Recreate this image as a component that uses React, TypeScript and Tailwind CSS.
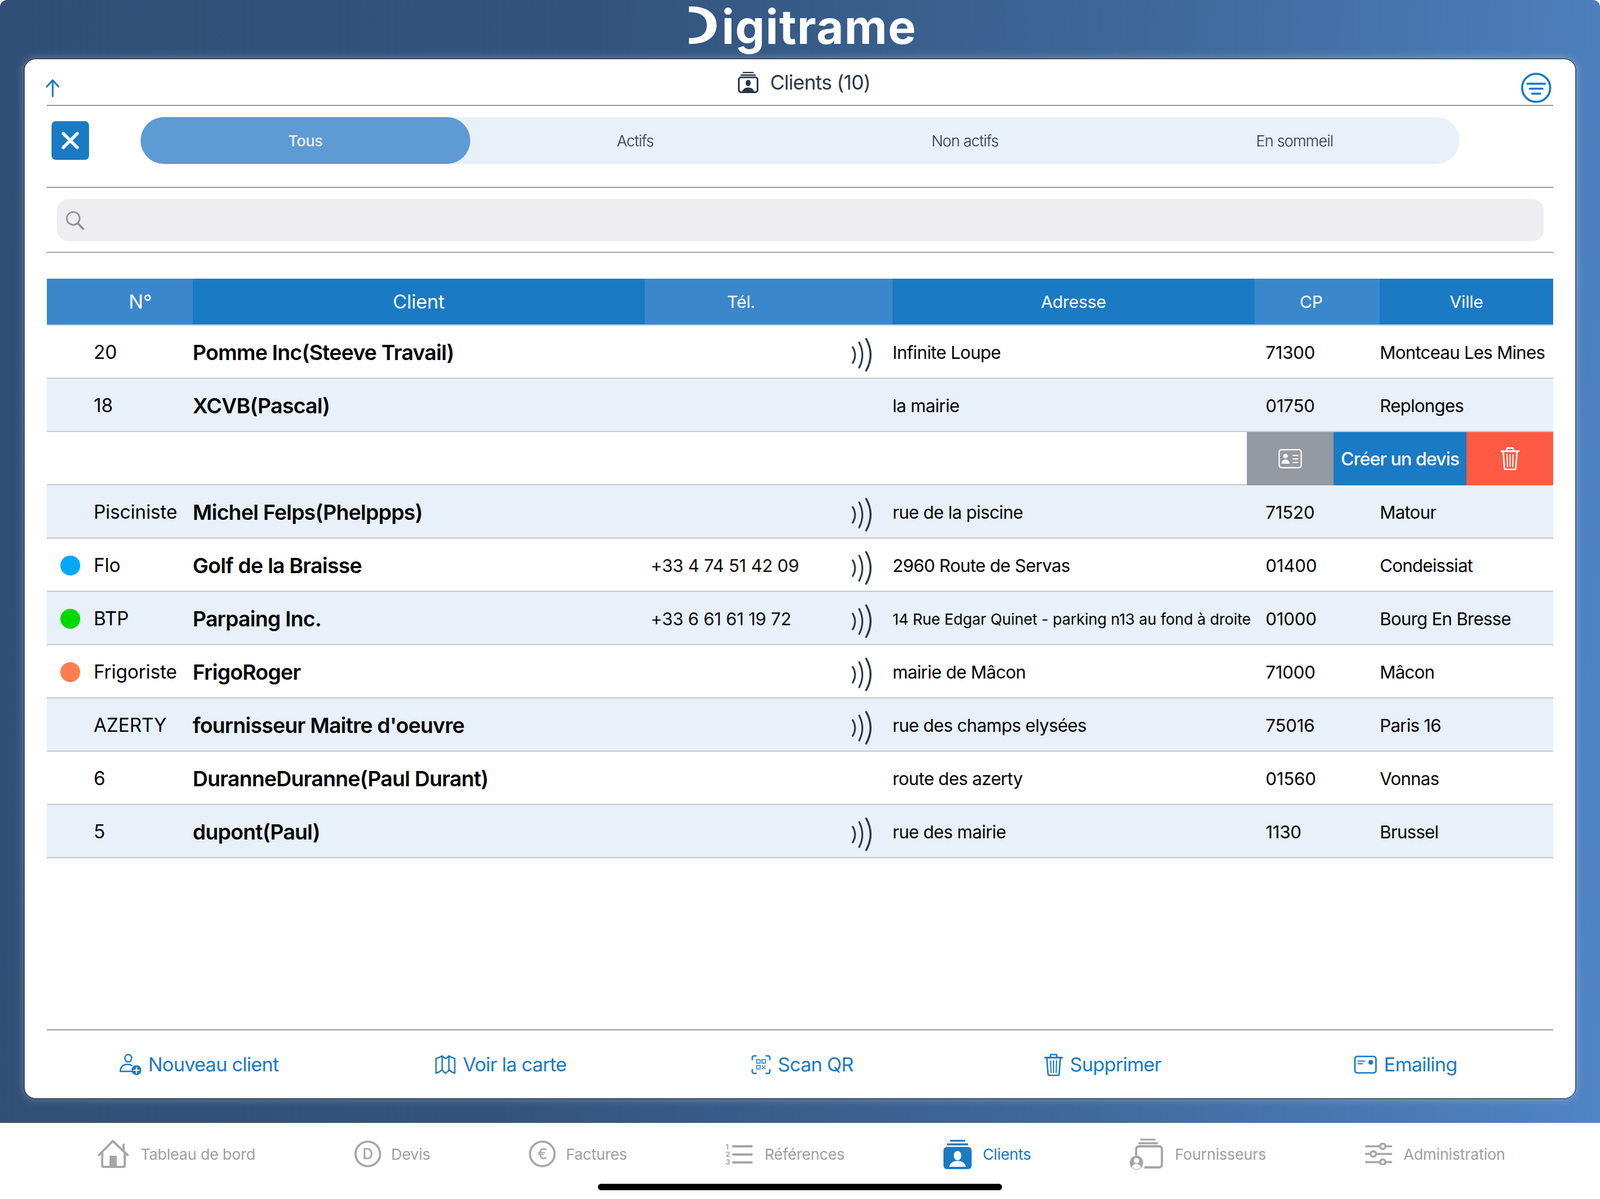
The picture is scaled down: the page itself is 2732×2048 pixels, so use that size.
import React from "react";

const BLUE = "#1a7ac4";
const GRAY = "#a6a6a6";
const INK = "#2b3648";

function ClientsIcon({ color, solid, className }: { color: string; solid?: boolean; className: string }) {
  return (
    <svg viewBox="0 0 48 51" className={className}>
      <rect x="11" y="1" width="26" height="3" rx="1" fill={color} />
      <rect x="6" y="7" width="36" height="3.4" rx="1" fill={color} />
      {solid ? (
        <>
          <rect x="0" y="13" width="48" height="38" rx="6" fill={color} />
          <ellipse cx="24" cy="28" rx="6.5" ry="8" fill="#fff" />
          <path d="M10 47c1-7 7-10 14-10s13 3 14 10z" fill="#fff" />
        </>
      ) : (
        <>
          <rect x="2" y="14" width="44" height="35" rx="5" fill="none" stroke={color} strokeWidth="4" />
          <ellipse cx="24" cy="27" rx="6" ry="7.5" fill={color} />
          <path d="M10 48c1-7 7-10 14-10s13 3 14 10z" fill={color} />
        </>
      )}
    </svg>
  );
}

function Nfc() {
  return (
    <svg viewBox="0 0 37 58" className="w-[37px] h-[58px] mt-[8px]" fill="none" stroke={INK} strokeLinecap="round" strokeWidth="3">
      <path d="M2 16q8 13.500 0 27" />
      <path d="M13 8q11 21.500 0 43" />
      <path d="M25 2q15 27 0 54" strokeWidth="3.400" />
    </svg>
  );
}

function Trash({ color, className }: { color: string; className: string }) {
  return (
    <svg viewBox="0 0 32 38" className={className} fill="none" stroke={color} strokeWidth="2.6" strokeLinecap="round" strokeLinejoin="round">
      <path d="M10.5 6V3.2c0-1.2.8-2 2-2h7c1.200 0 2 .8 2 2V6" />
      <path d="M1.500 6.500h29" strokeWidth="3" />
      <path d="M4.500 7l2 27.500c.1 1.500 1 2.300 2.500 2.300h14c1.500 0 2.400-.8 2.500-2.300l2-27.500" />
      <path d="M11 12l.6 20M16 12v20M21 12l-.6 20" strokeWidth="2" />
    </svg>
  );
}

function UserPlus() {
  return (
    <svg viewBox="0 0 37 37" className="w-[37px] h-[37px]" fill="none" stroke={BLUE} strokeWidth="2.400" strokeLinecap="round">
      <ellipse cx="15" cy="7.500" rx="5.800" ry="6.300" />
      <path d="M20 30H1.500c-.5-7 5-12 12-12 3 0 5.500.8 7.500 2" />
      <circle cx="29" cy="28" r="8.500" fill={BLUE} stroke="none" />
      <path d="M29 23.500v9M24.500 28h9" stroke="#fff" strokeWidth="2.200" />
    </svg>
  );
}

function MapIcon() {
  return (
    <svg viewBox="0 0 35 33" className="w-[35px] h-[33px]" fill="none" stroke={BLUE} strokeWidth="2.400" strokeLinejoin="round">
      <path d="M1.500 6c4-.8 7.500-2.400 10.500-4.500 2 2.200 4 3.800 5.500 4.500 2-.7 4.500-2.300 6-4.500 3 2.100 6.500 3.700 10 4.500v25c-3.500-1-7-3-10-5.500-1.500 2.500-4 4.500-6 5.500-1.500-1-3.500-3-5.500-5.500-3 2.500-6.500 4.500-10.500 5.500z" />
      <path d="M12 2v24M23.500 2v24" />
    </svg>
  );
}

function ScanQr() {
  return (
    <svg viewBox="0 0 33 33" className="w-[33px] h-[33px]" fill="none" stroke={BLUE} strokeWidth="2.400" strokeLinecap="round">
      <path d="M8 1.500H4.500a3 3 0 0 0-3 3V8M25 1.500h3.500a3 3 0 0 1 3 3V8M8 31.500H4.500a3 3 0 0 1-3-3V25M25 31.500h3.500a3 3 0 0 0 3-3V25" />
      <g strokeWidth="1.500">
        <rect x="9" y="8" width="6" height="6" />
        <rect x="18" y="8" width="6" height="6" />
        <rect x="9" y="18" width="6" height="6" />
      </g>
      <path d="M18 18h2v2h-2zM22 18h2v2h-2zM20 20h2v2h-2zM18 22h2v2h-2zM22 22h2v2h-2z" fill={BLUE} stroke="none" />
    </svg>
  );
}

function Mail() {
  return (
    <svg viewBox="0 0 39 31" className="w-[39px] h-[31px]" fill="none" stroke={BLUE} strokeWidth="2.600" strokeLinecap="round">
      <rect x="1.500" y="1.500" width="36" height="28" rx="4" />
      <path d="M7 9.500h11M7 14h7" strokeWidth="2.200" />
      <circle cx="28.500" cy="11.500" r="4" fill={BLUE} stroke="none" />
    </svg>
  );
}

function HomeIcon() {
  return (
    <svg viewBox="0 0 53 48" className="w-[53px] h-[48px]" fill="none" stroke={GRAY} strokeWidth="3.800" strokeLinecap="round" strokeLinejoin="round">
      <path d="M2 26L25.500 2 51 26" />
      <path d="M44 19V8" />
      <path d="M7.500 22v21.500c0 1.800 1 2.700 2.800 2.700h33c1.800 0 2.700-.9 2.700-2.700V22" />
      <rect x="20" y="27" width="12.500" height="19" fill={GRAY} stroke="none" />
    </svg>
  );
}

function CircleLetter({ letter }: { letter: string }) {
  return (
    <svg viewBox="0 0 46 46" className="w-[46px] h-[46px]">
      <circle cx="23" cy="23" r="21" fill="none" stroke={GRAY} strokeWidth="3.600" />
      <text x="23" y="32" textAnchor="middle" fontSize="25" fontWeight="500" fill={GRAY} fontFamily="Inter, sans-serif">
        {letter}
      </text>
    </svg>
  );
}

function RefIcon() {
  return (
    <svg viewBox="0 -3 46 44" className="w-[46px] h-[44px]">
      <g fill={GRAY} fontSize="12" fontWeight="700" fontFamily="Inter, sans-serif">
        <text x="0" y="11">1</text>
        <text x="0" y="24">2</text>
        <text x="0" y="37">3</text>
      </g>
      <path d="M13 6h33M13 20h33M13 33.500h33" stroke={GRAY} strokeWidth="4" strokeLinecap="round" />
    </svg>
  );
}

function SupplierIcon() {
  return (
    <svg viewBox="0 0 57 54" className="w-[57px] h-[54px]" fill="none">
      <rect x="18" y="1" width="26" height="3" rx="1" fill={GRAY} />
      <rect x="15" y="7" width="33" height="3.400" rx="1" fill={GRAY} />
      <path d="M11 30V19c0-3 2-5 5-5h34c3 0 5 2 5 5v26c0 3-2 5-5 5H25" stroke={GRAY} strokeWidth="3.800" />
      <ellipse cx="11.500" cy="42" rx="11.500" ry="12" fill={GRAY} />
      <circle cx="11.500" cy="38.500" r="4.500" fill="#fff" />
      <path d="M4 50c1-4 4-6 7.500-6s6.500 2 7.500 6c-2 2-4.500 3-7.500 3s-5.500-1-7.500-3z" fill="#fff" />
    </svg>
  );
}

function SlidersIcon() {
  return (
    <svg viewBox="0 0 46 38" className="w-[46px] h-[38px]" fill="none" stroke={GRAY} strokeWidth="3.600" strokeLinecap="round">
      <path d="M1.500 6h23M36 6h8.500M1.500 19h7M20 19h24.500M1.500 33h23M36 33h8.500" />
      <circle cx="30" cy="6" r="4.600" />
      <circle cx="14" cy="19" r="4.600" />
      <circle cx="30" cy="33" r="4.600" />
    </svg>
  );
}

type Row = {
  dot?: string;
  no: string;
  name: string;
  tel?: string;
  nfc?: boolean;
  addr: string;
  small?: boolean;
  cp: string;
  city: string;
  actions?: boolean;
};

const rows: Row[] = [
  { no: "20", name: "Pomme Inc(Steeve Travail)", nfc: true, addr: "Infinite Loupe", cp: "71300", city: "Montceau Les Mines" },
  { no: "18", name: "XCVB(Pascal)", addr: "la mairie", cp: "01750", city: "Replonges" },
  { no: "", name: "", addr: "", cp: "", city: "", actions: true },
  { no: "Pisciniste", name: "Michel Felps(Phelppps)", nfc: true, addr: "rue de la piscine", cp: "71520", city: "Matour" },
  { dot: "bg-[#00a8ff]", no: "Flo", name: "Golf de la Braisse", tel: "+33 4 74 51 42 09", nfc: true, addr: "2960 Route de Servas", cp: "01400", city: "Condeissiat" },
  { dot: "bg-[#00d800]", no: "BTP", name: "Parpaing Inc.", tel: "+33 6 61 61 19 72", nfc: true, addr: "14 Rue Edgar Quinet - parking n13 au fond à droite", small: true, cp: "01000", city: "Bourg En Bresse" },
  { dot: "bg-[#ff7f50]", no: "Frigoriste", name: "FrigoRoger", nfc: true, addr: "mairie de Mâcon", cp: "71000", city: "Mâcon" },
  { no: "AZERTY", name: "fournisseur Maitre d'oeuvre", nfc: true, addr: "rue des champs elysées", cp: "75016", city: "Paris 16" },
  { no: "6", name: "DuranneDuranne(Paul Durant)", addr: "route des azerty", cp: "01560", city: "Vonnas" },
  { no: "5", name: "dupont(Paul)", nfc: true, addr: "rue des mairie", cp: "1130", city: "Brussel" },
];

const cols = "grid grid-cols-[249px_772px_423px_618px_214px_296px]";

function TableRow({ r, alt }: { r: Row; alt: boolean }) {
  if (r.actions) {
    return (
      <div className="h-[91px] flex justify-end bg-white border-b-2 border-[#c4c8d0]">
        <div className="w-[148px] bg-[#9599a1] flex items-center justify-center -mb-[2px]">
          <svg viewBox="0 0 40 33" className="w-[40px] h-[33px]" fill="none" stroke="#fff" strokeWidth="2.200">
            <rect x="1.200" y="1.200" width="37.600" height="30.600" rx="4" />
            <circle cx="12" cy="12" r="3.800" fill="#fff" stroke="none" />
            <path d="M5 25c.5-5 3.500-7 7-7s6.500 2 7 7z" fill="#fff" stroke="none" />
            <path d="M24 11h10M24 17h10M24 23h10" strokeWidth="2" />
          </svg>
        </div>
        <div className="w-[227px] bg-[#1a7ac4] flex items-center justify-center pt-[2px] text-white text-[31px] font-medium tracking-[-0.95px] -mb-[2px]">
          Créer un devis
        </div>
        <div className="w-[148px] bg-[#ff5a43] flex items-center justify-center -mb-[2px]">
          <Trash color="#fff" className="w-[33px] h-[39px]" />
        </div>
      </div>
    );
  }
  return (
    <div className={`${cols} h-[91px] pt-[3px] items-center border-b-2 border-[#c4c8d0] text-[30px] tracking-[-0.6px] text-black ${alt ? "bg-[#e8f0fa]" : "bg-white"}`}>
      <div className="flex items-center pl-[23px] gap-[23px] text-[32px]">
        <span className={`w-[34px] h-[34px] rounded-full shrink-0 ${r.dot ?? ""}`} />
        <span className="whitespace-nowrap tracking-[-0.1px]">{r.no}</span>
      </div>
      <div className="text-[36px] font-semibold tracking-[-0.75px] whitespace-nowrap">{r.name}</div>
      <div className="flex items-center justify-between pl-[10px] pr-[33px] h-full">
        <span className="whitespace-nowrap text-[#111] tracking-[-0.3px]">{r.tel}</span>
        {r.nfc ? <Nfc /> : null}
      </div>
      <div className={`whitespace-nowrap ${r.small ? "text-[26px] tracking-[-0.1px]" : ""}`}>{r.addr}</div>
      <div className="pl-[19px] tracking-[-0.2px]">{r.cp}</div>
      <div className="whitespace-nowrap tracking-[-0.7px]">{r.city}</div>
    </div>
  );
}

export default function App() {
  const actions: [React.ReactNode, string, string][] = [
    [<UserPlus />, "Nouveau client", "pr-[9px]"],
    [<MapIcon />, "Voir la carte", "pr-[4px]"],
    [<ScanQr />, "Scan QR", ""],
    [<Trash color={BLUE} className="w-[32px] h-[38px]" />, "Supprimer", ""],
    [<Mail />, "Emailing", "pl-[9px]"],
  ];
  const tabs: [React.ReactNode, string, boolean, string][] = [
    [<HomeIcon />, "Tableau de bord", false, "gap-[20px]"],
    [<CircleLetter letter="D" />, "Devis", false, "gap-[17px]"],
    [<CircleLetter letter="€" />, "Factures", false, "gap-[17px]"],
    [<RefIcon />, "Références", false, "gap-[20px]"],
    [<ClientsIcon color={BLUE} solid className="w-[48px] h-[51px]" />, "Clients", true, "gap-[19px]"],
    [<SupplierIcon />, "Fournisseurs", false, "gap-[20px]"],
    [<SlidersIcon />, "Administration", false, "gap-[20px]"],
  ];

  return (
    <div className="relative w-[2732px] h-[2048px] bg-white flex flex-col overflow-hidden [font-family:Inter,sans-serif]">
      <div className="h-[1918px] rounded-t-[12px] bg-[linear-gradient(95deg,#2f4f76_0%,#33537d_35%,#3f6a9c_70%,#5084c5_100%)] px-[41px] flex flex-col">
        <div className="h-[100px] flex justify-center items-start">
          <div className="flex items-baseline mt-[1px] pr-[15px] text-white [font-family:'Open_Sans',sans-serif] font-bold text-[80px] leading-[84px] tracking-[1.4px]">
            <span className="text-[88px] font-semibold tracking-[0px] [clip-path:inset(0_0_0_42%)] scale-x-[1.45]">D</span>
            <span className="ml-[17px]">igitrame</span>
          </div>
        </div>

        <div className="w-[2650px] h-[1777px] bg-white rounded-[20px] border border-[#111] shadow-[0_0_16px_rgba(255,255,255,0.3)] flex flex-col px-[38px]">
          <div className="h-[80px] grid grid-cols-[1fr_auto_1fr] border-b-2 border-[#9c9c9c]">
            <div className="flex items-end pb-[13px] -ml-[2px]">
              <svg viewBox="0 0 24 31" className="w-[24px] h-[31px]" fill="none" stroke={BLUE} strokeWidth="3" strokeLinecap="round" strokeLinejoin="round">
                <path d="M12 29.500V2M2 13L12 2l10 11" />
              </svg>
            </div>
            <div className="flex items-center gap-[20px] pl-[14px] text-[34px] tracking-[-0.7px] text-[#2b3648]">
              <ClientsIcon color={INK} className="w-[35px] h-[37px]" />
              <span>Clients (10)</span>
            </div>
            <div className="flex items-end justify-end pr-[3px] pb-[3px]">
              <svg viewBox="0 0 52 52" className="w-[52px] h-[52px]" fill="none" stroke={BLUE} strokeLinecap="round">
                <circle cx="26" cy="26" r="24" strokeWidth="3.600" />
                <path d="M11 19h30M15 27.500h22M19 36h14" strokeWidth="3.400" />
              </svg>
            </div>
          </div>

          <div className="h-[140px] border-b-2 border-[#9c9c9c] flex items-start pt-[19px]">
            <button className="mt-[7px] ml-[8px] w-[64px] h-[66px] rounded-[7px] bg-[#1a7ac4] flex items-center justify-center shrink-0">
              <svg viewBox="0 0 30 30" className="w-[30px] h-[30px]" fill="none" stroke="#fff" strokeWidth="5.400" strokeLinecap="round">
                <path d="M3 3l24 24M27 3L3 27" />
              </svg>
            </button>
            <div className="ml-[88px] w-[2252px] h-[80px] rounded-full bg-[#e8f0fa] grid grid-cols-4 text-[26px] tracking-[-0.8px] text-[#2e384a] font-light">
              <div className="rounded-full bg-[#5e9ad3] text-[#eef3fa] font-medium tracking-[-0.3px] flex items-center justify-center">Tous</div>
              <div className="flex items-center justify-center">Actifs</div>
              <div className="flex items-center justify-center">Non actifs</div>
              <div className="flex items-center justify-center">En sommeil</div>
            </div>
          </div>

          <div className="h-[111px] border-b-2 border-[#a8a8a8] pt-[19px] pl-[17px] pr-[16px]">
            <div className="h-[72px] rounded-[20px] bg-[#eeeef0] flex items-center pl-[15px]">
              <svg viewBox="0 0 32 33" className="w-[32px] h-[33px]" fill="none" stroke="#8e8e93" strokeLinecap="round">
                <circle cx="13" cy="13" r="11" strokeWidth="2.600" />
                <path d="M21 21.500l9 9.500" strokeWidth="3.400" />
              </svg>
            </div>
          </div>

          <div className="mt-[44px]">
            <div className={`${cols} h-[80px] text-white text-[29px] tracking-[-0.2px] border-b-2 border-[#a9c4de]`}>
              <div className="bg-[#3a87cb] flex items-center justify-center pt-[2px] pl-[70px] text-[33px]">N°</div>
              <div className="bg-[#1a7ac4] flex items-center justify-center pt-[2px] text-[33px]">Client</div>
              <div className="bg-[#3a87cb] flex items-center justify-center pt-[2px] pr-[94px]">Tél.</div>
              <div className="bg-[#1a7ac4] flex items-center justify-center pt-[2px]">Adresse</div>
              <div className="bg-[#3a87cb] flex items-center justify-center pt-[2px] pr-[20px]">CP</div>
              <div className="bg-[#1a7ac4] flex items-center justify-center pt-[2px]">Ville</div>
            </div>
            {rows.map((r, i) => (
              <TableRow key={i} r={r} alt={i % 2 === 1} />
            ))}
          </div>

          <div className="flex-1" />

          <div className="h-[118px] border-t-2 border-[#9c9c9c] grid grid-cols-5 pl-[8px] pt-[1px] text-[33px] tracking-[-0.75px] text-[#1a7ac4]">
            {actions.map(([icon, label, shift]) => (
              <div key={label} className={`flex items-center justify-center gap-[12px] ${shift}`}>
                {icon}
                <span className="whitespace-nowrap">{label}</span>
              </div>
            ))}
          </div>
        </div>
      </div>

      <div className="flex-1 flex items-start justify-between pl-[167px] pr-[162px] pt-[26px] text-[26px] tracking-[-0.25px]">
        {tabs.map(([icon, label, active, gap]) => (
          <div key={label} className={`h-[54px] flex items-center ${gap} ${active ? "text-[#1a7ac4]" : "text-[#a0a0a0]"}`}>
            {icon}
            <span className="whitespace-nowrap">{label}</span>
          </div>
        ))}
      </div>

      <div className="absolute left-[1021px] top-[2022px] w-[690px] h-[11px] rounded-full bg-black" />
    </div>
  );
}
